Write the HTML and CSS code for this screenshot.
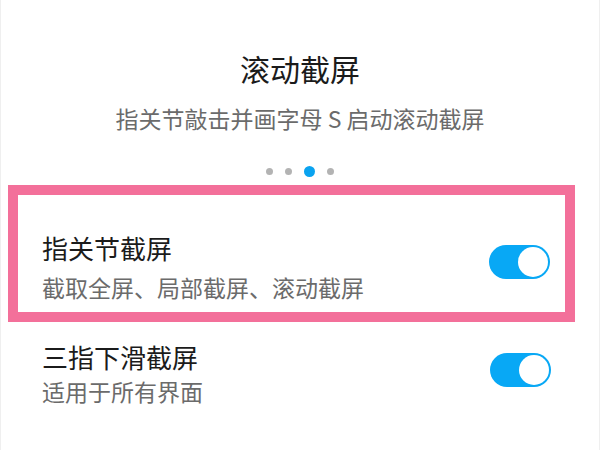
FILE: index.html
```html
<!DOCTYPE html>
<html lang="zh-CN">
<head>
    <meta charset="UTF-8">
    <meta name="viewport" content="width=device-width, initial-scale=1.0">
    <title>滚动截屏</title>
    <link rel="stylesheet" href="styles.css">
</head>
<body>
<div class="screen">
    <div class="intro">
        <div class="intro-title">滚动截屏</div>
        <div class="intro-sub">指关节敲击并画字母 S 启动滚动截屏</div>
        <div class="dots">
            <span class="dot"></span>
            <span class="dot"></span>
            <span class="dot active"></span>
            <span class="dot"></span>
        </div>
    </div>

    <div class="highlight">
        <div class="row row-boxed">
            <div class="row-text">
                <div class="row-title">指关节截屏</div>
                <div class="row-sub">截取全屏、局部截屏、滚动截屏</div>
            </div>
            <div class="toggle"><span class="knob"></span></div>
        </div>
    </div>

    <div class="row row-plain">
        <div class="row-text">
            <div class="row-title">三指下滑截屏</div>
            <div class="row-sub sub-tight">适用于所有界面</div>
        </div>
        <div class="toggle toggle-low"><span class="knob"></span></div>
    </div>
</div>
</body>
</html>
```

FILE: styles.css
```css
body {
    margin: 0;
    background: #ffffff;
    font-family: "Noto Sans CJK SC", "Noto Sans", sans-serif;
}

.screen {
    height: 450px;
    border-left: 1px solid #efefef;
    border-right: 1px solid #efefef;
    box-sizing: border-box;
}

.intro {
    text-align: center;
    padding-top: 50px;
}
.intro-title {
    font-size: 30px;
    line-height: 36px;
    color: #1b1b1b;
}
.intro-sub {
    margin-top: 16px;
    font-size: 23px;
    line-height: 32px;
    color: #6b6b6b;
}

.dots {
    display: flex;
    justify-content: center;
    align-items: center;
    gap: 12px;
    height: 12px;
    margin-top: 31px;
}
.dot {
    width: 7px;
    height: 7px;
    border-radius: 50%;
    background: #b3b3b3;
}
.dot.active {
    width: 11px;
    height: 11px;
    background: #0aa3f0;
}

.highlight {
    margin: 8px 0 0 7px;
    width: 567px;
    height: 137px;
    box-sizing: border-box;
    border: 10px solid #f3709a;
}

.row {
    display: flex;
    justify-content: space-between;
    align-items: flex-start;
}
.row-boxed {
    padding: 36px 15px 0 24px;
}
.row-plain {
    padding: 18px 48px 0 41px;
}
.row-title {
    font-size: 26px;
    line-height: 34px;
    color: #1b1b1b;
}
.row-sub {
    margin-top: 7px;
    font-size: 23px;
    line-height: 30px;
    color: #6b6b6b;
}
.sub-tight {
    margin-top: 2px;
}

.toggle {
    display: flex;
    justify-content: flex-end;
    align-items: center;
    width: 61px;
    height: 34px;
    margin-top: 14px;
    padding: 0 2px;
    box-sizing: border-box;
    border-radius: 17px;
    background: #08a8f5;
}
.toggle-low {
    margin-top: 13px;
}
.knob {
    width: 30px;
    height: 30px;
    border-radius: 50%;
    background: #ffffff;
}
```
